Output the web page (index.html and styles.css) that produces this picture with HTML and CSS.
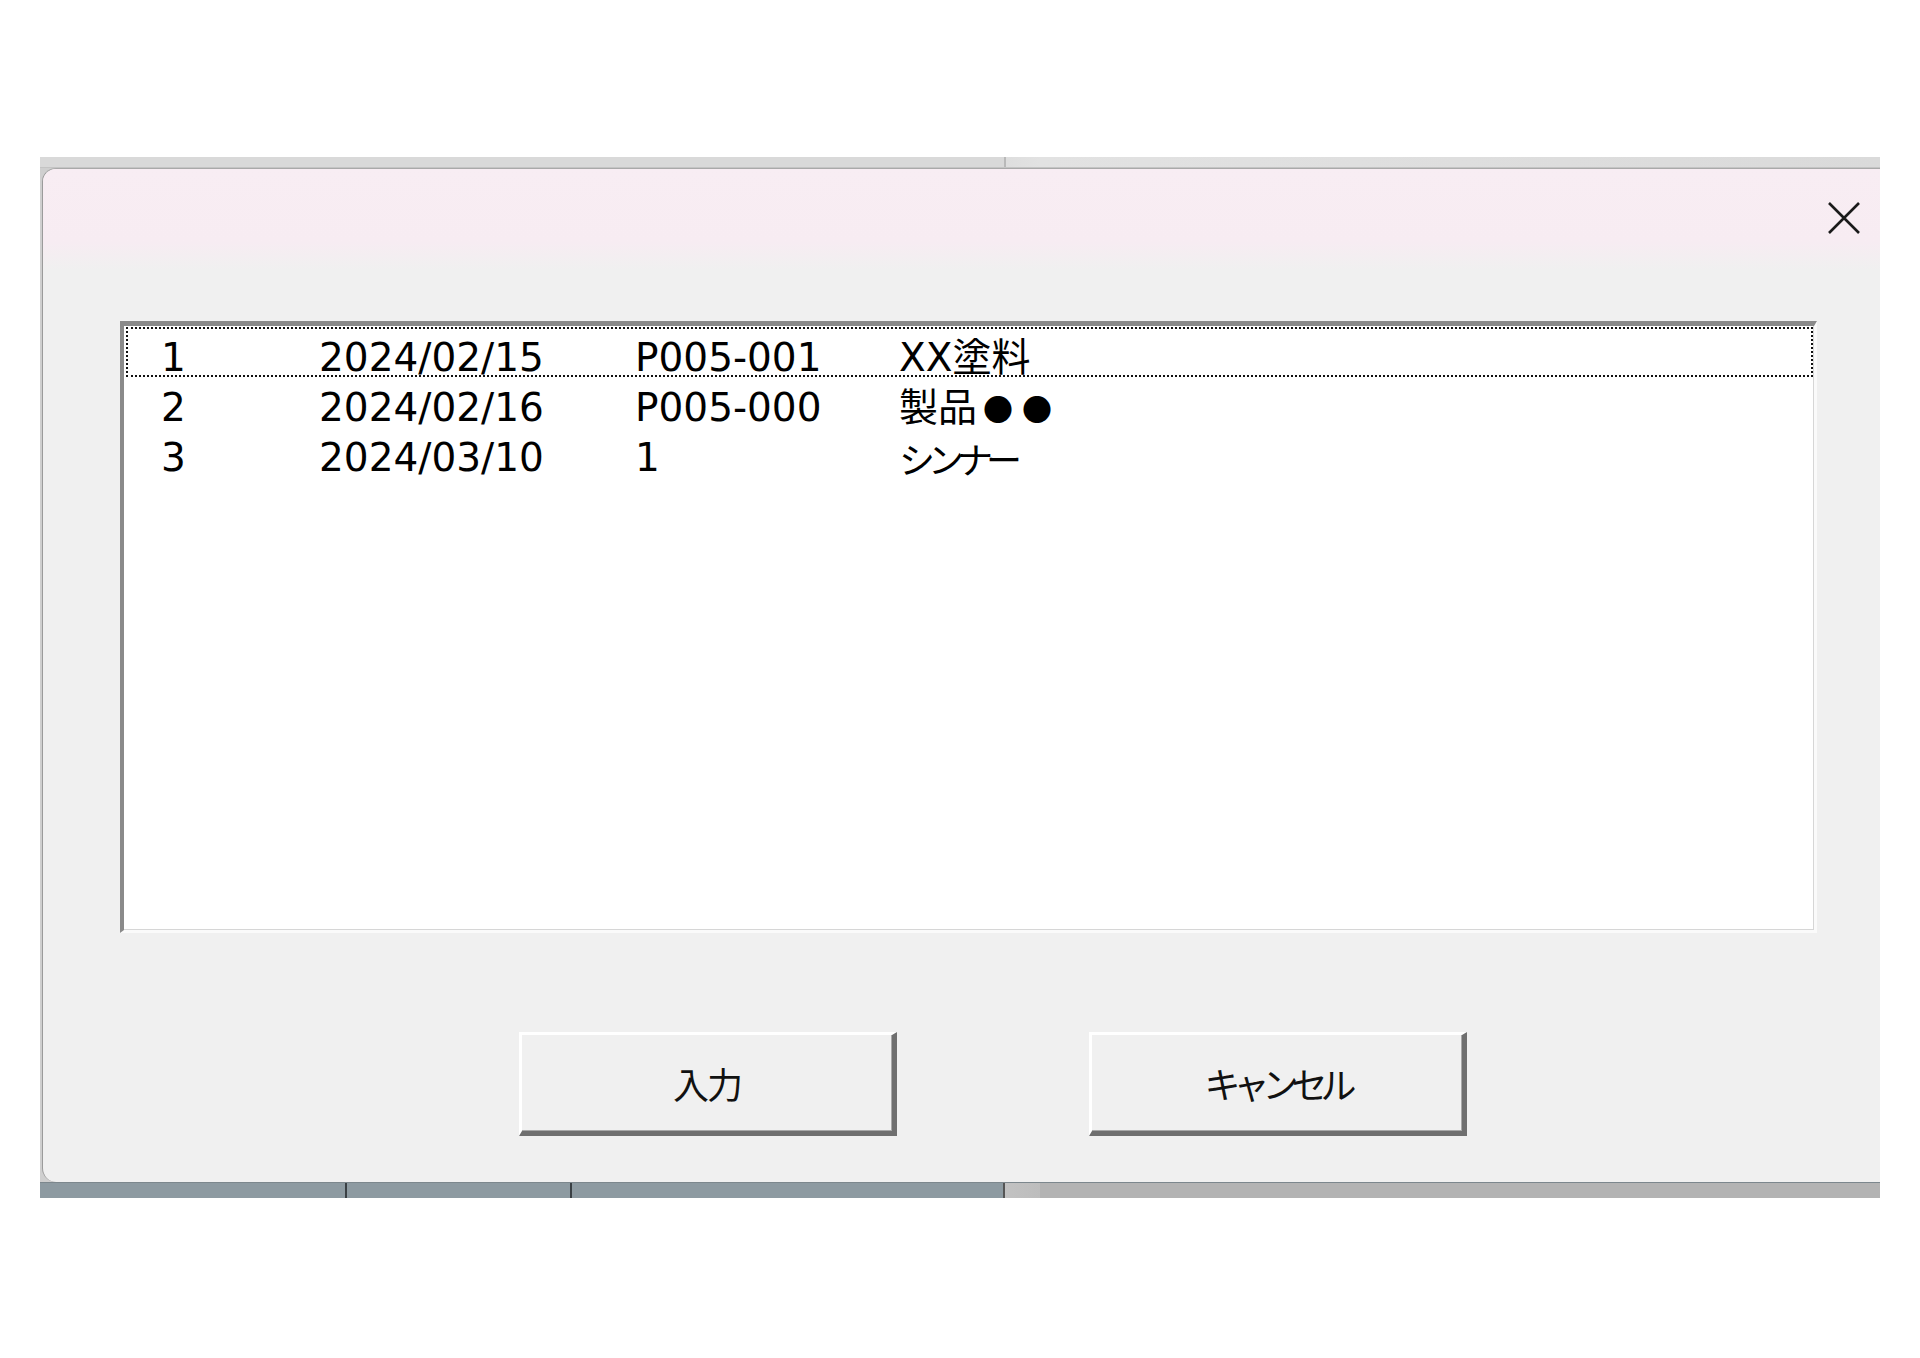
FILE: index.html
```html
<!DOCTYPE html>
<html lang="ja">
<head>
<meta charset="utf-8">
<title>選択</title>
<link rel="stylesheet" href="styles.css">
</head>
<body>
<div class="backdrop">
  <div class="sheet-top"></div>
  <div class="sheet-mid">
    <div class="dialog">
      <div class="titlebar">
        <span class="close">
          <svg width="34" height="34" viewBox="0 0 34 34"><path d="M2 2 L32 32 M32 2 L2 32" stroke="#1a1a1a" stroke-width="2.6" fill="none"/></svg>
        </span>
      </div>
      <div class="listbox">
        <div class="row focus"><span>1</span><span>2024/02/15</span><span>P005-001</span><span>XX塗料</span></div>
        <div class="row"><span>2</span><span>2024/02/16</span><span>P005-000</span><span>製品<i class="dot">●●</i></span></div>
        <div class="row"><span>3</span><span>2024/03/10</span><span>1</span><span class="kana">シンナー</span></div>
      </div>
      <div class="buttons">
        <div class="btn">入力</div>
        <div class="btn narrow">キャンセル</div>
      </div>
    </div>
  </div>
  <div class="sheet-bottom"></div>
</div>
</body>
</html>
```

FILE: styles.css
```css
* { box-sizing:border-box; }
body { margin:0; background:#fff; }

.backdrop { width:1840px; margin:157px 0 0 40px; background:#d4d4d4; }
.sheet-top { height:11px; background:linear-gradient(90deg, #d9d9d9 0, #d9d9d9 964px, #b9b9b9 964px, #b9b9b9 966px, #dedede 966px, #e2e2e2 1000px, #dadada 100%); border-bottom:1px solid #c4c4c4; }
.sheet-mid { display:flex; padding-left:2px; background:#cfcfcf; }
.sheet-bottom { height:16px; background:linear-gradient(90deg, transparent 0, transparent 305px, #3a4044 305px, #3a4044 307px, transparent 307px, transparent 530px, #3a4044 530px, #3a4044 532px, transparent 532px, transparent 963px, #555 963px, #555 965px, transparent 965px), linear-gradient(90deg, #8d9aa1 0, #8d9aa1 964px, #c2c2c2 964px, #bdbdbd 1000px, #b3b3b3 1000px, #b3b3b3 100%); border-top:1px solid #7c878d; }

.dialog { flex:1; height:1014px; background:#f0f0f0; border-left:1px solid #9b9b9b; border-top:1px solid #a9a9a9; border-radius:14px 0 0 14px; overflow:hidden; }

.titlebar { height:101px; display:flex; justify-content:flex-end; align-items:flex-start; padding:32px 19px 0 0; background:linear-gradient(180deg, #f8edf3 0, #f7ecf2 72%, #f0f0f0 100%); }
.close { display:block; width:34px; height:34px; }
.close svg { display:block; }

.listbox { height:612px; margin:51px 63px 0 77px; background:#fff; border-style:solid; border-width:5px 3px 3px 4px; border-color:#8a8a8a #fafafa #fafafa #8a8a8a; box-shadow:inset -1px -1px 0 #d6d6d6; padding:1px 1px 0 2px; font:39px/48px "DejaVu Sans", "Noto Sans CJK JP", sans-serif; color:#000; }
.row { display:grid; grid-template-columns:158px 316px 264px 1fr; padding-left:33px; height:50px; border:2px solid transparent; white-space:nowrap; }
.row span { padding-top:5px; }
.row.focus { border:2px dotted #111; }
.row .dot { font-style:normal; font-family:"Noto Sans CJK JP", sans-serif; font-size:30px; letter-spacing:9px; padding-left:6px; }
.row .kana { font-family:"Noto Sans CJK JP", sans-serif; font-size:36px; letter-spacing:-7px; }

.buttons { display:flex; gap:192px; margin-top:99px; padding-left:476px; }
.btn { width:378px; height:104px; display:flex; align-items:center; justify-content:center; background:#f0f0f0; border-style:solid; border-width:3px 5px 5px 3px; border-color:#fff #6f6f6f #6f6f6f #fff; box-shadow:inset -1px -1px 0 #a8a8a8; font:36px "Noto Sans CJK JP", sans-serif; color:#111; letter-spacing:-2px; }
.btn.narrow { letter-spacing:-7px; }
```
